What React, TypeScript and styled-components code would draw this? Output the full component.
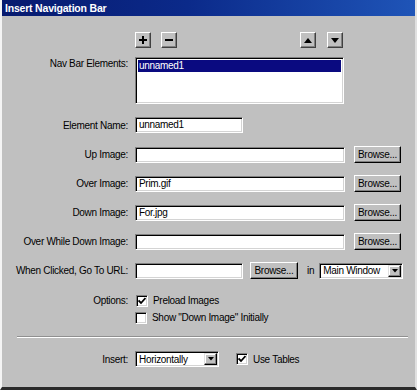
import React from "react";
import styled, { createGlobalStyle } from "styled-components";

const Global = createGlobalStyle`
  html, body { margin: 0; padding: 0; background: #c0c0c0; }
  * { box-sizing: border-box; }
`;

const Window = styled.div`
  width: 417px;
  height: 390px;
  background: #c0c0c0;
  border-left: 2px solid #f4f4f4;
  border-right: 2px solid #e0e0e0;
  border-bottom: 3px solid #2a2a2a;
  display: flex;
  flex-direction: column;
  font-family: "Liberation Sans", Arial, sans-serif;
  font-size: 10px;
  letter-spacing: -0.3px;
  color: #000;
  overflow: hidden;
`;

const TitleBar = styled.div`
  height: 16px;
  margin-left: -2px;
  margin-right: -2px;
  padding-left: 5px;
  display: flex;
  align-items: center;
  background: linear-gradient(to right, #071a6e 0%, #0b2a8a 45%, #1f55b8 100%);
  color: #fff;
  font-weight: bold;
  font-size: 10.5px;
  letter-spacing: -0.2px;
`;

const Row = styled.div<{ $mt: number; $h?: number; $top?: boolean }>`
  display: flex;
  align-items: ${(p) => (p.$top ? "flex-start" : "center")};
  margin-top: ${(p) => p.$mt}px;
  height: ${(p) => p.$h ?? 17}px;
`;

const Label = styled.div<{ $pt?: number }>`
  width: 126px;
  margin-right: 7px;
  text-align: right;
  white-space: nowrap;
  padding-top: ${(p) => p.$pt ?? 0}px;
`;

const Toolbar = styled.div`
  display: flex;
  margin-top: 16px;
  height: 16px;
  padding-left: 133px;
`;

const ToolButton = styled.div<{ $ml: number }>`
  width: 16px;
  height: 16px;
  margin-left: ${(p) => p.$ml}px;
  background: #c0c0c0;
  border-top: 1px solid #fff;
  border-left: 1px solid #fff;
  border-right: 1px solid #404040;
  border-bottom: 1px solid #404040;
  box-shadow: inset -1px -1px 0 #808080;
  display: flex;
  align-items: center;
  justify-content: center;
`;

const sunken = `
  background: #fff;
  border-top: 1px solid #808080;
  border-left: 1px solid #808080;
  border-right: 1px solid #fff;
  border-bottom: 1px solid #fff;
  box-shadow: inset 1px 1px 0 #000, inset -1px -1px 0 #d4d4d4;
`;

const ListBox = styled.div`
  ${sunken}
  width: 209px;
  height: 47px;
  padding: 2px;
`;

const ListItem = styled.div<{ $selected?: boolean }>`
  height: 12px;
  line-height: 12px;
  padding-left: 1px;
  background: ${(p) => (p.$selected ? "#0a0a80" : "transparent")};
  color: ${(p) => (p.$selected ? "#fff" : "#000")};
`;

const TextInput = styled.div<{ $w: number }>`
  ${sunken}
  width: ${(p) => p.$w}px;
  height: 16px;
  line-height: 13px;
  padding-left: 3px;
  white-space: nowrap;
`;

const Button = styled.div<{ $ml: number; $w?: number }>`
  width: ${(p) => p.$w ?? 47}px;
  height: 17px;
  margin-left: ${(p) => p.$ml}px;
  background: #c0c0c0;
  border-top: 1px solid #fff;
  border-left: 1px solid #fff;
  border-right: 1px solid #000;
  border-bottom: 1px solid #000;
  box-shadow: inset -1px -1px 0 #808080;
  display: flex;
  align-items: center;
  justify-content: center;
  padding-bottom: 1px;
`;

const InText = styled.span`
  margin-left: 9px;
  margin-right: 5px;
`;

const Select = styled.div<{ $w: number }>`
  ${sunken}
  width: ${(p) => p.$w}px;
  height: 16px;
  display: flex;
  align-items: center;
  padding: 0 1px 0 3px;
`;

const SelectText = styled.span`
  flex: 1;
  white-space: nowrap;
`;

const DropButton = styled.div`
  width: 13px;
  height: 12px;
  background: #c0c0c0;
  border-top: 1px solid #e0e0e0;
  border-left: 1px solid #e0e0e0;
  border-right: 1px solid #000;
  border-bottom: 1px solid #000;
  box-shadow: inset -1px -1px 0 #808080, inset 1px 1px 0 #fff;
  display: flex;
  align-items: center;
  justify-content: center;
`;

const Check = styled.div`
  ${sunken}
  width: 12px;
  height: 12px;
  display: flex;
  align-items: center;
  justify-content: center;
  flex-shrink: 0;
`;

const CheckLabel = styled.span`
  margin-left: 5px;
  white-space: nowrap;
`;

const CheckGroup = styled.div<{ $ml: number }>`
  display: flex;
  align-items: center;
  margin-left: ${(p) => p.$ml}px;
`;

const Indent = styled.div`
  width: 135px;
  flex-shrink: 0;
`;

const Separator = styled.div`
  margin: 12px 7px 0 15px;
  height: 2px;
  border-top: 1px solid #909090;
  border-bottom: 1px solid #fff;
`;

const Arrow = ({ dir }: { dir: "up" | "down" }) => (
  <svg width="8" height="5" viewBox="0 0 8 5">
    {dir === "up" ? (
      <polygon points="0,5 8,5 4,0" fill="#000" />
    ) : (
      <polygon points="0,0 8,0 4,5" fill="#000" />
    )}
  </svg>
);

const SmallArrow = () => (
  <svg width="6" height="4" viewBox="0 0 6 4">
    <polygon points="0,0 6,0 3,3.5" fill="#000" />
  </svg>
);

const Plus = () => (
  <svg width="8" height="8" viewBox="0 0 8 8">
    <rect x="3" y="0" width="2" height="8" fill="#000" />
    <rect x="0" y="3" width="8" height="2" fill="#000" />
  </svg>
);

const Minus = () => (
  <svg width="8" height="8" viewBox="0 0 8 8">
    <rect x="0" y="3" width="8" height="2" fill="#000" />
  </svg>
);

const Tick = () => (
  <svg width="8" height="8" viewBox="0 0 8 8">
    <polyline points="0.5,3.5 3,6 7.5,1" fill="none" stroke="#000" strokeWidth="1.8" />
  </svg>
);

export default function App() {
  return (
    <>
      <Global />
      <Window>
        <TitleBar>Insert Navigation Bar</TitleBar>
        <Toolbar>
          <ToolButton $ml={0}>
            <Plus />
          </ToolButton>
          <ToolButton $ml={10}>
            <Minus />
          </ToolButton>
          <ToolButton $ml={123}>
            <Arrow dir="up" />
          </ToolButton>
          <ToolButton $ml={11}>
            <Arrow dir="down" />
          </ToolButton>
        </Toolbar>

        <Row $mt={9} $h={47} $top>
          <Label $pt={1}>Nav Bar Elements:</Label>
          <ListBox>
            <ListItem $selected>unnamed1</ListItem>
          </ListBox>
        </Row>

        <Row $mt={13} $h={16}>
          <Label>Element Name:</Label>
          <TextInput $w={108}>unnamed1</TextInput>
        </Row>

        <Row $mt={13}>
          <Label>Up Image:</Label>
          <TextInput $w={210}></TextInput>
          <Button $ml={9}>Browse...</Button>
        </Row>

        <Row $mt={12}>
          <Label>Over Image:</Label>
          <TextInput $w={210}>Prim.gif</TextInput>
          <Button $ml={9}>Browse...</Button>
        </Row>

        <Row $mt={12}>
          <Label>Down Image:</Label>
          <TextInput $w={210}>For.jpg</TextInput>
          <Button $ml={9}>Browse...</Button>
        </Row>

        <Row $mt={12}>
          <Label>Over While Down Image:</Label>
          <TextInput $w={210}></TextInput>
          <Button $ml={9}>Browse...</Button>
        </Row>

        <Row $mt={12}>
          <Label>When Clicked, Go To URL:</Label>
          <TextInput $w={108}></TextInput>
          <Button $ml={7} $w={48}>
            Browse...
          </Button>
          <InText>in</InText>
          <Select $w={84}>
            <SelectText>Main Window</SelectText>
            <DropButton>
              <SmallArrow />
            </DropButton>
          </Select>
        </Row>

        <Row $mt={15} $h={13}>
          <Label>Options:</Label>
          <CheckGroup $ml={1}>
            <Check>
              <Tick />
            </Check>
            <CheckLabel>Preload Images</CheckLabel>
          </CheckGroup>
        </Row>

        <Row $mt={4} $h={13}>
          <Indent />
          <CheckGroup $ml={-2}>
            <Check />
            <CheckLabel>Show "Down Image" Initially</CheckLabel>
          </CheckGroup>
        </Row>

        <Separator />

        <Row $mt={13} $h={16}>
          <Label>Insert:</Label>
          <Select $w={84}>
            <SelectText>Horizontally</SelectText>
            <DropButton>
              <SmallArrow />
            </DropButton>
          </Select>
          <CheckGroup $ml={17}>
            <Check>
              <Tick />
            </Check>
            <CheckLabel>Use Tables</CheckLabel>
          </CheckGroup>
        </Row>
      </Window>
    </>
  );
}
